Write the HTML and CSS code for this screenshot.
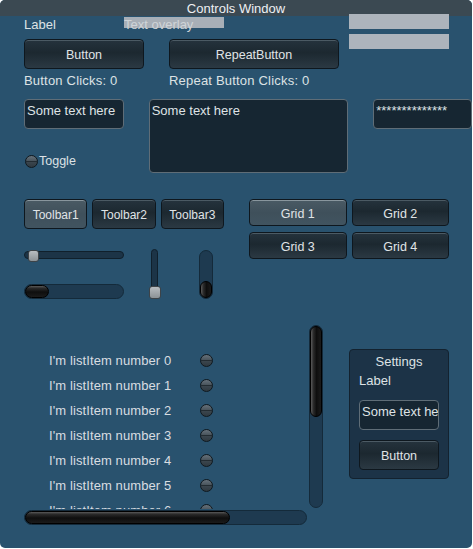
FILE: index.html
```html
<!DOCTYPE html>
<html>
<head>
<meta charset="utf-8">
<link rel="stylesheet" href="styles.css">
</head>
<body>
<div class="window">
  <div class="titlebar">Controls Window</div>
  <div class="content">
    <div class="sec-top">
      <div class="top-left">
        <div class="row-label">
          <span class="w100">Label</span>
          <span class="overlay">Text overlay</span>
        </div>
        <div class="row-buttons">
          <div class="btn btn-main">Button</div>
          <div class="btn btn-repeat">RepeatButton</div>
        </div>
        <div class="row-clicks">
          <span class="clicks-a">Button Clicks: 0</span>
          <span>Repeat Button Clicks: 0</span>
        </div>
      </div>
      <div class="top-right">
        <div class="greybox"></div>
        <div class="greybox"></div>
      </div>
    </div>

    <div class="sec-fields">
      <div class="fields-left">
        <div class="field textfield">Some text here</div>
        <div class="toggle-row"><span class="toggle"></span><span>Toggle</span></div>
      </div>
      <div class="field textarea">Some text here</div>
      <div class="field password">**************</div>
    </div>

    <div class="sec-controls">
      <div class="controls-left">
        <div class="toolbar">
          <div class="btn sel">Toolbar1</div>
          <div class="btn">Toolbar2</div>
          <div class="btn">Toolbar3</div>
        </div>
        <div class="sliders">
          <div class="col-h">
            <div class="hslider"><div class="hslider-track"></div><div class="hslider-thumb"></div></div>
            <div class="hscroll"><div class="hthumb small"></div></div>
          </div>
          <div class="vslider"><div class="vslider-track"></div><div class="vslider-thumb"></div></div>
          <div class="vscroll"><div class="vthumb small"></div></div>
        </div>
      </div>
      <div class="grid">
        <div class="btn sel">Grid 1</div>
        <div class="btn">Grid 2</div>
        <div class="btn">Grid 3</div>
        <div class="btn">Grid 4</div>
      </div>
    </div>

    <div class="sec-bottom">
      <div class="scrollview">
        <div class="viewport">
          <div class="item"><span class="item-text">I'm listItem number 0</span><span class="toggle"></span></div>
          <div class="item"><span class="item-text">I'm listItem number 1</span><span class="toggle"></span></div>
          <div class="item"><span class="item-text">I'm listItem number 2</span><span class="toggle"></span></div>
          <div class="item"><span class="item-text">I'm listItem number 3</span><span class="toggle"></span></div>
          <div class="item"><span class="item-text">I'm listItem number 4</span><span class="toggle"></span></div>
          <div class="item"><span class="item-text">I'm listItem number 5</span><span class="toggle"></span></div>
          <div class="item"><span class="item-text">I'm listItem number 6</span><span class="toggle"></span></div>
          <div class="item"><span class="item-text">I'm listItem number 7</span><span class="toggle"></span></div>
        </div>
        <div class="vscroll vbig"><div class="vthumb big"></div></div>
        <div class="hscroll hbig"><div class="hthumb big"></div></div>
      </div>
      <div class="settings">
        <div class="settings-title">Settings</div>
        <div class="settings-label">Label</div>
        <div class="field settings-field">Some text here</div>
        <div class="btn settings-btn">Button</div>
      </div>
    </div>
  </div>
</div>
</body>
</html>
```

FILE: styles.css
```css
* { box-sizing: border-box; }

body {
  margin: 0;
  background: #ffffff;
  font-family: "Liberation Sans", Arial, sans-serif;
  font-size: 13px;
  color: #dde2e5;
}

.window {
  width: 472px;
  height: 548px;
  background: #29526e;
  border-radius: 5px;
  overflow: hidden;
}

.titlebar {
  height: 16px;
  line-height: 18px;
  background: #3b4952;
  text-align: center;
  color: #eef0f2;
}

.content { padding-left: 24px; }

/* top section */
.sec-top { display: flex; }
.top-left { width: 315px; }
.row-label { display: flex; height: 23px; line-height: 18px; }
.w100 { width: 100px; }
.overlay {
  width: 100px;
  height: 18px;
  white-space: nowrap;
  color: #cfd4d8;
  background: linear-gradient(#a8afb7, #a8afb7) 0 1px / 100% 11px no-repeat;
}
.row-buttons { display: flex; gap: 25px; height: 30px; }
.row-clicks { display: flex; margin-top: 4px; line-height: 16px; letter-spacing: 0.2px; }
.clicks-a { width: 145px; }
.top-right {
  margin-left: 10px;
  margin-top: -2px;
  display: flex;
  flex-direction: column;
  gap: 5px;
}
.greybox { width: 100px; height: 15px; background: #adb4bc; }

/* buttons */
.btn {
  height: 30px;
  line-height: 30px;
  text-align: center;
  white-space: nowrap;
  color: #e0e4e7;
  font-size: 12.5px;
  border: 1px solid #0e171e;
  border-radius: 4px;
  background: linear-gradient(#25333d 0%, #1c2830 45%, #2b3943 100%);
  box-shadow: inset 0 1px 0 rgba(150, 165, 175, 0.35);
}
.btn.sel {
  background: linear-gradient(#4a5a64 0%, #3f505b 50%, #415460 100%);
  box-shadow: inset 0 1px 0 rgba(190, 200, 206, 0.55);
}
.btn-main { width: 120px; }
.btn-repeat { width: 170px; }

/* fields */
.sec-fields { display: flex; align-items: flex-start; margin-top: 10px; }
.fields-left { width: 125px; }
.field {
  background: #162632;
  border: 1px solid #5f6d77;
  border-radius: 4px;
  padding: 3px 2px 2px;
  line-height: 16px;
  white-space: nowrap;
  overflow: hidden;
  color: #dfe3e6;
}
.textfield { width: 100px; height: 30px; }
.textarea { width: 200px; height: 74px; }
.password { width: 99px; height: 30px; margin-left: 25px; }

.toggle-row { display: flex; align-items: center; margin-top: 24px; line-height: 16px; font-size: 12.5px; }
.toggle {
  flex: none;
  width: 13px;
  height: 13px;
  border-radius: 50%;
  border: 1px solid #0f181e;
  background: linear-gradient(#66717a 0%, #4b565e 42%, #232c32 50%, #3a454d 58%, #2f3940 100%);
}
.toggle-row .toggle { margin: 0 1px; }

/* controls */
.sec-controls { display: flex; align-items: flex-start; margin-top: 26px; }
.controls-left { width: 225px; }
.toolbar { display: flex; gap: 5px; width: 200px; }
.toolbar .btn { flex: 1; font-size: 12px; }

.sliders { display: flex; align-items: flex-start; margin-top: 21px; height: 50px; }
.col-h { width: 100px; }
.hslider { position: relative; height: 12px; }
.hslider-track {
  position: absolute;
  left: 0; right: 0; top: 1px;
  height: 8px;
  border-radius: 4px;
  background: #1c3447;
  border: 1px solid #10202c;
}
.hslider-thumb {
  position: absolute;
  left: 4px; top: 0;
  width: 11px; height: 12px;
  border-radius: 3px;
  border: 1px solid #3d4348;
  background: linear-gradient(#b8bdc1, #8c9296);
}
.hscroll {
  margin-top: 22px;
  height: 15px;
  width: 100px;
  border-radius: 8px;
  background: #1e3a50;
  border: 1px solid #142a3a;
  padding: 0;
}
.hthumb {
  height: 13px;
  border-radius: 7px;
  background: linear-gradient(#5a5a5a 0%, #2a2a2a 20%, #0e0e0e 55%, #1b1b1b 100%);
  border: 1px solid #000;
}
.hthumb.small { width: 24px; }

.vslider { position: relative; margin-left: 25px; width: 12px; height: 50px; margin-top: -1px; }
.vslider-track {
  position: absolute;
  left: 2px; top: 0; bottom: 0;
  width: 7px;
  border-radius: 4px;
  background: #1c3447;
  border: 1px solid #10202c;
}
.vslider-thumb {
  position: absolute;
  left: 0; bottom: 0;
  width: 12px; height: 13px;
  border-radius: 3px;
  border: 1px solid #3d4348;
  background: linear-gradient(#b8bdc1, #8c9296);
}
.vscroll {
  margin-left: 38px;
  width: 14px;
  height: 49px;
  border-radius: 7px;
  background: #1e3a50;
  border: 1px solid #142a3a;
  display: flex;
  flex-direction: column;
  justify-content: flex-end;
}
.vthumb {
  width: 12px;
  border-radius: 6px;
  background: linear-gradient(90deg, #5a5a5a 0%, #2a2a2a 25%, #0e0e0e 55%, #1b1b1b 100%);
  border: 1px solid #000;
}
.vthumb.small { height: 17px; }

.grid {
  display: grid;
  grid-template-columns: 1fr 1fr;
  grid-auto-rows: 27px;
  column-gap: 5px;
  row-gap: 6px;
  width: 200px;
}
.grid .btn { height: 27px; line-height: 28px; font-size: 12.5px; }

/* bottom */
.sec-bottom { display: flex; align-items: flex-start; margin-top: 25px; }
.scrollview {
  display: grid;
  grid-template-columns: 284px 14px;
  grid-template-rows: 184px 15px;
  column-gap: 1px;
  row-gap: 1px;
}
.viewport {
  overflow: hidden;
  padding-top: 23px;
  padding-left: 25px;
}
.item { display: flex; align-items: center; height: 25px; color: #d8dde1; }
.item-text { width: 151px; white-space: nowrap; letter-spacing: 0.1px; }
.vscroll.vbig { margin-left: 0; height: 183px; justify-content: flex-start; }
.vthumb.big { height: 91px; }
.hscroll.hbig { margin-top: 0; width: 283px; }
.hthumb.big { width: 205px; }

.settings {
  margin-left: 26px;
  margin-top: 24px;
  width: 100px;
  height: 130px;
  background: #1c3347;
  border: 1px solid #13222f;
  border-radius: 4px;
  padding: 4px 0 0 9px;
}
.settings-title { line-height: 16px; text-align: center; padding-right: 9px; }
.settings-label { line-height: 16px; margin-top: 3px; }
.settings-field { margin-top: 11px; width: 80px; height: 30px; }
.settings-btn { margin-top: 10px; width: 80px; }
```
